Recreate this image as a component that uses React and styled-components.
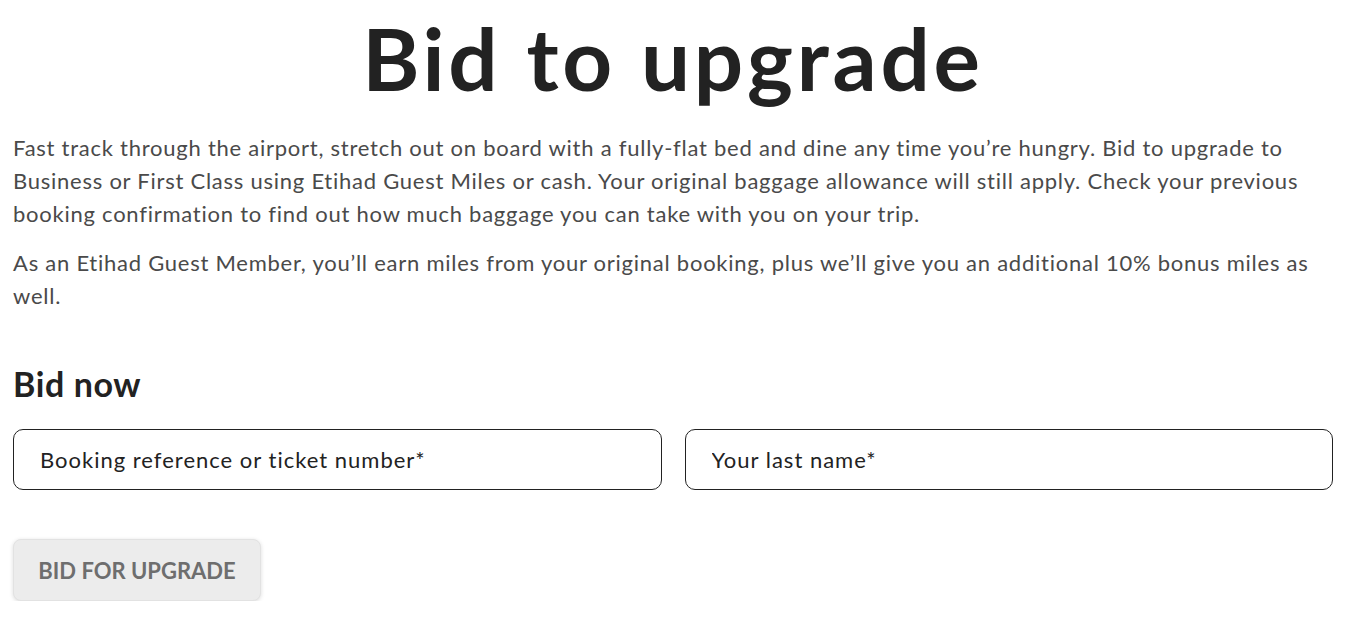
import React from 'react';
import styled, { createGlobalStyle } from 'styled-components';

const Global = createGlobalStyle`
  body {
    margin: 0;
    background: #fff;
    font-family: Lato, "Noto Sans", sans-serif;
  }
`;

const Page = styled.main`
  padding: 0 17px 0 13px;
`;

const Title = styled.h1`
  margin: 0 0 25px;
  padding-top: 10px;
  text-align: center;
  font-size: 87px;
  line-height: 96px;
  font-weight: 700;
  letter-spacing: 3.8px;
  color: #222;
`;

const Text = styled.p`
  margin: 0 0 16px;
  font-size: 22px;
  line-height: 33px;
  letter-spacing: 0.75px;
  color: #4a4a4a;
`;

const Heading = styled.h2`
  margin: 50px 0 23px;
  font-size: 34px;
  line-height: 44px;
  font-weight: 700;
  letter-spacing: 0.6px;
  color: #222;
`;

const Fields = styled.div`
  display: grid;
  grid-template-columns: 1fr 1fr;
  gap: 23px;
`;

const Field = styled.input`
  height: 61px;
  box-sizing: border-box;
  border: 1px solid #222;
  border-radius: 10px;
  padding: 0 26px;
  font-family: inherit;
  font-size: 22px;
  letter-spacing: 1px;
  color: #222;
  outline: none;
  &::placeholder { color: #222; }
`;

const Button = styled.button`
  margin-top: 49px;
  width: 248px;
  height: 62px;
  border: 1px solid #e2e2e2;
  border-radius: 8px;
  background: #ececec;
  box-shadow: 0 1px 4px rgba(0,0,0,0.14);
  font-family: inherit;
  font-size: 22px;
  font-weight: 700;
  color: #6e6e6e;
`;

export default function App() {
  return (
    <Page>
      <Global />
      <Title>Bid to upgrade</Title>
      <Text>
        Fast track through the airport, stretch out on board with a fully-flat bed and dine any time you’re hungry. Bid to upgrade to Business or First Class using Etihad Guest Miles or cash. Your original baggage allowance will still apply. Check your previous booking confirmation to find out how much baggage you can take with you on your trip.
      </Text>
      <Text>
        As an Etihad Guest Member, you’ll earn miles from your original booking, plus we’ll give you an additional 10% bonus miles as well.
      </Text>
      <Heading>Bid now</Heading>
      <Fields>
        <Field placeholder="Booking reference or ticket number*" />
        <Field placeholder="Your last name*" />
      </Fields>
      <Button>BID FOR UPGRADE</Button>
    </Page>
  );
}
